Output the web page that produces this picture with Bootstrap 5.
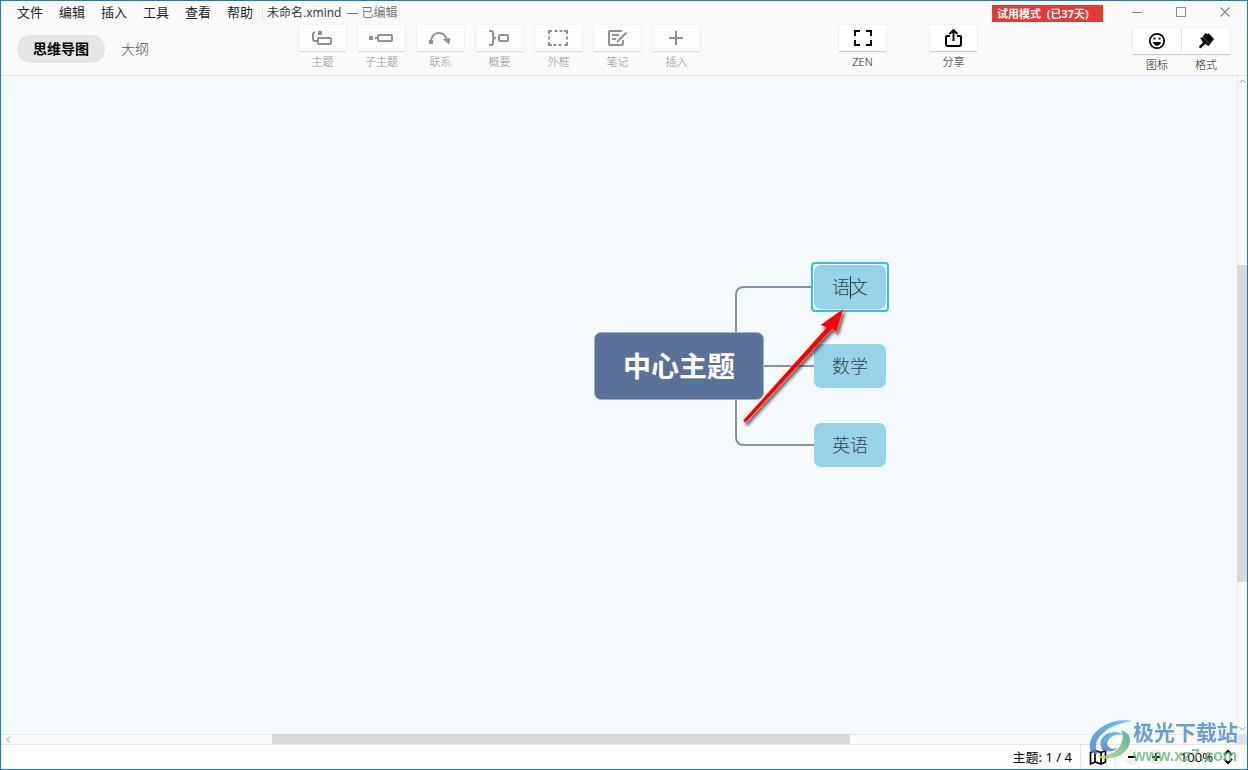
<!DOCTYPE html>
<html lang="zh-CN">
<head>
<meta charset="utf-8">
<meta name="viewport" content="width=device-width, initial-scale=1">
<title>未命名.xmind</title>
<link href="https://cdn.jsdelivr.net/npm/bootstrap@5.3.0/dist/css/bootstrap.min.css" rel="stylesheet">
<style>
body{font-family:"Noto Sans","Noto Sans CJK SC",sans-serif;font-size:13px;line-height:16px;color:#222;background:#fafafa}
button{border:0;background:none;padding:0;color:inherit}
svg{display:block;flex:none}
.app-window{border:1px solid #1979ca}
.app-header{border-bottom:1px solid #e6e7e9}
.title-row{height:24px}
.menu-item{padding:3px 8px;color:#222;text-decoration:none}
.doc-title{font-family:"Open Sans","Noto Sans CJK SC",sans-serif;font-size:12px;border-left:1px solid #e3e3e3;padding-left:4px;margin-left:1px;color:#333}
.doc-state{color:#777;margin-left:5px}
.trial{background:#e53935;color:#fff;font-size:11px;font-weight:700;line-height:17px;margin-top:4px;width:111px;padding-left:5px;white-space:pre}
.win-buttons{margin-left:24px;width:120px;color:#888}
.tool-row{height:50px}
.view-tabs{margin:10px 0 0 16px;width:282px}
.view-tab{height:28px;padding:0 16px;border-radius:14px;font-size:14px;font-weight:300;color:#555}
.view-tab.active{background:#e5e5e5;color:#000;font-weight:700}
.tools{gap:12px}
.tool{width:47px;color:#222}
.tool-face{height:26px;width:100%;background:#fff;box-shadow:0 0 1px #ccc,0 1px 1px #ccc;color:#000}
.tool-text{margin-top:3px;white-space:nowrap;font-size:11px;line-height:16px;font-weight:300}
.tool:disabled{color:#909090}
.tool:disabled .tool-face{color:#909090;background:#fdfdfd;box-shadow:0 0 1px #ddd,0 1px 1px #ddd}
.zen{margin-left:139px}
.share{margin-left:44px}
.panel-tools{margin:3px 17px 0 0;gap:1px}
.panel-tools .tool{width:48px}
.canvas{background:#f5faff}
.v-bar{width:10px;background:#fafafa;border-left:1px solid #e9e9e9}
.h-bar{height:10px;background:#fafafa;border-top:1px solid #e9e9e9}
.bar-corner{background:#e1e1e1}
.v-thumb{position:absolute;left:-1px;right:0;top:28.7%;height:48.2%;background:#d9d9d9}
.h-thumb{position:absolute;top:-1px;bottom:0;left:21.9%;width:46.8%;background:#d9d9d9}
.mind-map{position:absolute;left:calc(50% - 25px);top:calc(50% - 143px);width:296px;height:206px}
.root-topic{position:absolute;left:0;top:70px;width:170px;height:68px;border:1px solid #a3b1cb;border-radius:7px;background:#5b719a;color:#fff;font-size:28px;line-height:40px;font-weight:700}
.topic{position:absolute;left:220px;width:72px;height:44px;border-radius:7px;background:#96d2e8;color:#34424b;font-size:18px;font-weight:300;line-height:26px}
.topic input{width:100%;border:0;background:none;padding:0;text-align:center;color:inherit;font-weight:300;outline:0}
.topic-a{top:3px;box-shadow:0 0 0 1px #fff}
.topic-a::before{content:"";position:absolute;inset:-3px;border:2px solid #2ebdff;border-radius:4px}
.topic-b{top:82px}
.topic-c{top:161px}
.caret{position:absolute;left:36px;top:11px;width:1px;height:23px;background:#333}
.pointer{position:absolute;left:0;top:0;overflow:visible}
.status{height:25px;background:#fff;border-top:1px solid #e6e6e6;color:#000}
.cell{height:100%;padding:0 8px;border-right:1px solid #e6e6e6}
.zoom-box{padding:0 12px 0 8px}
.round{width:16px;height:16px;border-radius:8px;background:#f2f2f2}
.watermark{position:absolute;right:9px;bottom:4px;pointer-events:none}
.wm-name{font-size:21px;line-height:30px;font-weight:700;color:#5c93d4;opacity:.9}
.wm-site{font-family:"Liberation Sans",sans-serif;font-size:16px;line-height:18px;font-weight:700;color:#62bd7c;opacity:.8}
</style>
</head>
<body>
<div class="app-window vh-100 d-flex flex-column position-relative overflow-hidden">
<header class="app-header">
  <div class="title-row d-flex align-items-start">
    <nav class="d-flex ms-2">
      <a class="menu-item" href="#">文件</a><a class="menu-item" href="#">编辑</a><a class="menu-item" href="#">插入</a><a class="menu-item" href="#">工具</a><a class="menu-item" href="#">查看</a><a class="menu-item" href="#">帮助</a>
    </nav>
    <div class="doc-title mt-1 text-nowrap">未命名.xmind<span class="doc-state">— 已编辑</span></div>
    <div class="trial ms-auto">试用模式  (已37天)</div>
    <div class="win-buttons d-flex pe-3 pt-1">
      <button type="button" aria-label="最小化"><svg width="20" height="16" fill="none" stroke="currentColor"><path d="M5 7.500h10"/></svg></button>
      <button class="ms-4" type="button" aria-label="最大化"><svg width="20" height="16" fill="none" stroke="currentColor"><path d="M5.500 2.500h9v9h-9z"/></svg></button>
      <button class="ms-auto" type="button" aria-label="关闭"><svg width="12" height="16" fill="none" stroke="currentColor" stroke-width="1.200"><path d="M1.500 2.500l9 9m0-9l-9 9"/></svg></button>
    </div>
  </div>
  <div class="tool-row d-flex align-items-start">
    <div class="view-tabs d-flex flex-shrink-0">
      <button type="button" class="view-tab active">思维导图</button><button type="button" class="view-tab">大纲</button>
    </div>
    <div class="tools d-flex">
      <button class="tool" type="button" disabled><span class="tool-face d-flex align-items-center justify-content-center"><svg width="23" height="18" fill="none" stroke="currentColor" stroke-width="2"><path d="M4 3.500H3Q2 3.500 2 5v5q0 2 2 2h3"/><rect x="7" y="9" width="13" height="6" rx="1"/><path d="M7 4h4" stroke-width="4"/></svg></span><span class="tool-text d-block">主题</span></button>
      <button class="tool" type="button" disabled><span class="tool-face d-flex align-items-center justify-content-center"><svg width="25" height="18" fill="none" stroke="currentColor" stroke-width="2"><rect x="9" y="6" width="14" height="6" rx="1"/><path d="M6 9h3"/><path d="M0 9h4" stroke-width="4"/></svg></span><span class="tool-text d-block">子主题</span></button>
      <button class="tool" type="button" disabled><span class="tool-face d-flex align-items-center justify-content-center"><svg width="25" height="18" fill="none" stroke="currentColor" stroke-width="2"><path d="M3 12C4 2 16 1 19 11"/><path d="M1 13h4" stroke-width="4"/><path d="M14.500 10l8-1-1.500 6.500z" fill="currentColor" stroke="none"/></svg></span><span class="tool-text d-block">联系</span></button>
      <button class="tool" type="button" disabled><span class="tool-face d-flex align-items-center justify-content-center"><svg width="23" height="18" fill="none" stroke="currentColor" stroke-width="2"><path d="M1 2h2q2 0 2 2v3q0 2 3 2-3 0-3 2v3q0 2-2 2H1"/><rect x="11" y="6" width="9" height="6" rx="1"/></svg></span><span class="tool-text d-block">概要</span></button>
      <button class="tool" type="button" disabled><span class="tool-face d-flex align-items-center justify-content-center"><svg width="23" height="18" fill="none" stroke="currentColor" stroke-width="2"><path d="M2 5V2h3M7.500 2h3M12.500 2h3M17 2h3v3M20 7.500v3M20 13v3h-3M14.500 16h-3M9.500 16h-3M5 16H2v-3M2 10.500v-3"/></svg></span><span class="tool-text d-block">外框</span></button>
      <button class="tool" type="button" disabled><span class="tool-face d-flex align-items-center justify-content-center"><svg width="21" height="18" fill="none" stroke="currentColor" stroke-width="2"><path d="M15 2H3Q2 2 2 3v12q0 1 1 1h12q1 0 1-1v-4M5 6h7M5 10h4"/><path d="M19.500 3.500L12 11l-2 2"/></svg></span><span class="tool-text d-block">笔记</span></button>
      <button class="tool" type="button" disabled><span class="tool-face d-flex align-items-center justify-content-center"><svg width="17" height="16" fill="none" stroke="currentColor" stroke-width="2"><path d="M8 1v14M1 8h14"/></svg></span><span class="tool-text d-block">插入</span></button>
    </div>
    <button class="tool zen" type="button"><span class="tool-face d-flex align-items-center justify-content-center"><svg width="21" height="18" fill="none" stroke="currentColor" stroke-width="2"><path d="M3 7V2h5M14 2h5v5M19 11v5h-5M8 16H3v-5"/></svg></span><span class="tool-text d-block">ZEN</span></button>
    <button class="tool share" type="button"><span class="tool-face d-flex align-items-center justify-content-center"><svg width="19" height="18" fill="none" stroke="currentColor" stroke-width="2"><path d="M6 7H3Q2 7 2 8v7q0 2 2 2h11q2 0 2-2V8q0-1-1-1h-3M9.500 12V2M5.500 5l4-4 4 4"/></svg></span><span class="tool-text d-block">分享</span></button>
    <div class="panel-tools d-flex ms-auto">
      <button class="tool" type="button"><span class="tool-face d-flex align-items-center justify-content-center"><svg width="18" height="18" fill="none" stroke="currentColor" stroke-width="1.700"><circle cx="9" cy="9" r="7.200"/><path d="M5 10h8q-.8 3.800-4 3.800T5 10z" fill="currentColor" stroke="none"/><path d="M5.500 6.700h2M10.500 6.700h2"/></svg></span><span class="tool-text d-block">图标</span></button>
      <button class="tool" type="button"><span class="tool-face d-flex align-items-center justify-content-center"><svg width="18" height="18" fill="currentColor"><path d="M8.500 1l2 1.200 1-1L17 7l-3.700 4.700L5.500 5z"/><path d="M3.300 6.200L5 5l8.500 7-2 2-3.400-2-4.600 4.500-1.700-1.700L6 10.500z"/></svg></span><span class="tool-text d-block">格式</span></button>
    </div>
  </div>
</header>

<main class="flex-fill d-flex">
  <div class="canvas flex-fill position-relative">
    <div class="mind-map">
      <svg class="pointer" width="296" height="206" fill="none" stroke="#8592aa" stroke-width="2"><path d="M142 72V33q0-8 8-8h70M142 137v38q0 8 8 8h70M170 104h50"/></svg>
      <div class="root-topic d-flex align-items-center justify-content-center">中心主题</div>
      <div class="topic topic-a d-flex align-items-center"><input type="text" value="语文" aria-label="主题"><span class="caret"></span></div>
      <div class="topic topic-b d-flex align-items-center justify-content-center">数学</div>
      <div class="topic topic-c d-flex align-items-center justify-content-center">英语</div>
      <svg class="pointer" width="296" height="206"><defs><filter id="shade" x="-20%" y="-20%" width="150%" height="150%"><feDropShadow dx="2" dy="3" stdDeviation="1.500" flood-color="#222" flood-opacity=".7"/></filter></defs><path d="M149 158.500L232.500 65.500l-6-2.500L249.500 46.500l-7 24-4.500-3.500-86.500 94z" fill="#f00" stroke="#fff" stroke-opacity=".5" stroke-width=".5" filter="url(#shade)"/></svg>
    </div>
  </div>
  <div class="v-bar position-relative"><svg width="9" height="10" fill="none" stroke="#999"><path d="M1.500 7l3-3 3 3"/></svg><div class="v-thumb"></div><svg class="position-absolute bottom-0" width="9" height="10" fill="none" stroke="#999"><path d="M1.500 3l3 3 3-3"/></svg></div>
</main>
<div class="d-flex">
  <div class="h-bar flex-fill position-relative d-flex justify-content-between"><svg width="12" height="9" fill="none" stroke="#999"><path d="M9 1.500l-3 3 3 3"/></svg><div class="h-thumb"></div><svg width="12" height="9" fill="none" stroke="#999"><path d="M4 1.500l3 3-3 3"/></svg></div>
  <div class="v-bar bar-corner"></div>
</div>
<footer class="status d-flex align-items-center justify-content-end">
  <div class="cell d-flex align-items-center">主题: 1 / 4</div>
  <div class="cell d-flex align-items-center"><button type="button" aria-label="导航图"><svg width="18" height="18" fill="none" stroke="#000" stroke-width="1.700"><path d="M1.500 4.500L6 2.500l6 2 4.500-2v11.500L12 16l-6-2-4.500 2zM6 2.500V14M12 4.500V16"/></svg></button></div>
  <div class="zoom-box d-flex align-items-center">
    <button class="round" type="button" aria-label="缩小"><svg width="16" height="16" stroke="#000" stroke-width="2"><path d="M4 8h8"/></svg></button>
    <button class="round ms-2" type="button" aria-label="放大"><svg width="16" height="16" stroke="#000" stroke-width="2"><path d="M4 8h8M8 4v8"/></svg></button>
    <span class="ms-3">100%</span>
    <button class="ms-2" type="button" aria-label="缩放比例"><svg width="14" height="16" fill="none" stroke="#000" stroke-width="2"><path d="M3 6l4-4 4 4M3 10l4 4 4-4"/></svg></button>
  </div>
</footer>
<div class="watermark d-flex align-items-center">
  <svg width="44" height="44" viewBox="0 0 44 44" opacity=".85"><defs><linearGradient id="wa" x1="0" y1="1" x2="1" y2="0"><stop stop-color="#527fc6"/><stop offset="1" stop-color="#49c0f0"/></linearGradient><linearGradient id="wb" x1="0" y1="1" x2="1" y2="0"><stop stop-color="#c5d76a"/><stop offset="1" stop-color="#36a994"/></linearGradient></defs><path d="M44 2Q24-1 10 10-1 19 1 30q2 6 8 5-6-11 5-21Q25 4 44 2z" fill="url(#wa)"/><path d="M13 31Q8 19 20 14q9-3 15 2-9-2-14 3-5 5-1 9 3 3 9 1-7 6-16 2z" fill="url(#wa)"/><path d="M32 11q10 3 9 12-3 15-24 17-6 0-9-3 17 0 23-10 5-8 1-16z" fill="url(#wb)"/></svg>
  <div><div class="wm-name">极光下载站</div><div class="wm-site">www.xz7.com</div></div>
</div>
</div>
<script src="https://cdn.jsdelivr.net/npm/bootstrap@5.3.0/dist/js/bootstrap.bundle.min.js"></script>
</body>
</html>
